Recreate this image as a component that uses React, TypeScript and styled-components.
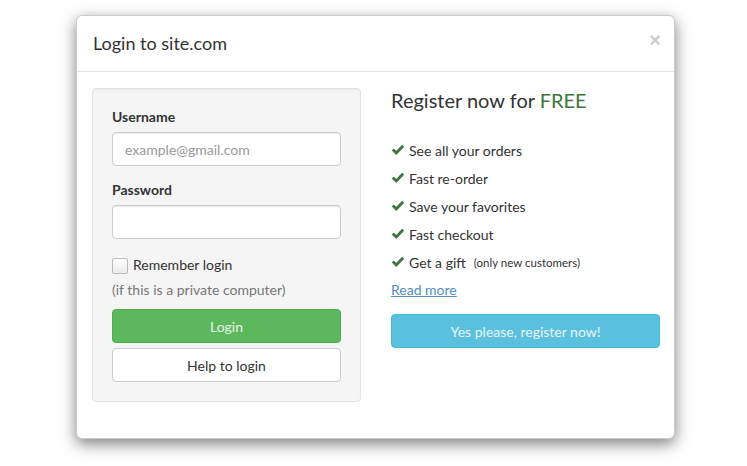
import React from 'react';
import styled, {createGlobalStyle} from 'styled-components';

const GlobalStyle = createGlobalStyle`
  html, body {
    margin: 0;
    padding: 0;
    background: #ffffff;
  }
  body {
    font-family: Lato, "Open Sans", "Liberation Sans", sans-serif;
    font-size: 14px;
    color: #333333;
  }
  * { box-sizing: border-box; }
`;

const Page = styled.div`
  width: 747px;
  height: 466px;
  padding-top: 15px;
  padding-left: 76px;
`;

const Modal = styled.div`
  width: 599px;
  background: #fff;
  border: 1px solid rgba(0, 0, 0, 0.2);
  border-radius: 6px;
  box-shadow: 0 5px 15px rgba(0, 0, 0, 0.5);
`;

const Header = styled.div`
  display: flex;
  align-items: center;
  justify-content: space-between;
  height: 56px;
  padding: 0 13px 2px 16px;
  border-bottom: 1px solid #e5e5e5;
`;

const Title = styled.h4`
  margin: 0;
  font-size: 18px;
  font-weight: 400;
  color: #333;
`;

const Close = styled.button`
  border: 0;
  background: transparent;
  padding: 0;
  margin-top: -6px;
  font-family: "Liberation Sans", sans-serif;
  font-size: 20px;
  font-weight: 700;
  line-height: 1;
  color: #000;
  opacity: 0.2;
`;

const Body = styled.div`
  display: grid;
  grid-template-columns: 269px 269px;
  column-gap: 30px;
  padding: 16px 15px 15px 15px;
`;

const Well = styled.div`
  background: #f5f5f5;
  border: 1px solid #e3e3e3;
  border-radius: 4px;
  padding: 19px 19px 19px;
  margin-bottom: 21px;
  box-shadow: inset 0 1px 1px rgba(0, 0, 0, 0.05);
`;

const Label = styled.label`
  display: block;
  font-weight: 700;
  font-size: 14px;
  margin-bottom: 7px;
  color: #333;
`;

const Field = styled.div`
  margin-bottom: 15px;
`;

const Input = styled.input`
  display: block;
  width: 100%;
  height: 34px;
  padding: 6px 12px;
  font-family: inherit;
  font-size: 14px;
  color: #555;
  background: #fff;
  border: 1px solid #ccc;
  border-radius: 4px;
  box-shadow: inset 0 1px 1px rgba(0, 0, 0, 0.075);
  &::placeholder { color: #999; }
`;

const CheckRow = styled.label`
  display: flex;
  align-items: center;
  gap: 5px;
  padding-top: 1px;
  font-size: 14px;
`;

const Box = styled.span`
  width: 16px;
  height: 16px;
  margin-top: 3px;
  border: 1px solid #bbb;
  border-radius: 2px;
  background: linear-gradient(#fff, #ececec);
`;

const Hint = styled.p`
  margin: 7px 0 11px;
  color: #777;
  font-size: 14px;
`;

const Button = styled.button<{$kind: 'success' | 'default' | 'info'}>`
  display: block;
  width: 100%;
  height: 34px;
  font-family: inherit;
  font-size: 14px;
  border-radius: 4px;
  border: 1px solid;
  ${p => p.$kind === 'success' && `
    background: #5cb85c;
    border-color: #4cae4c;
    color: #e8f5e8;
  `}
  ${p => p.$kind === 'info' && `
    background: #5bc0de;
    border-color: #46b8da;
    color: #e6f6fb;
  `}
  ${p => p.$kind === 'default' && `
    background: #fff;
    border-color: #ccc;
    color: #333;
  `}
  & + & { margin-top: 5px; }
`;

const Right = styled.div`
  display: flex;
  flex-direction: column;
`;

const Lead = styled.h3`
  margin: 0 0 24px;
  font-size: 20px;
  font-weight: 400;
  color: #333;
`;

const Free = styled.span`
  color: #3c763d;
`;

const List = styled.ul`
  list-style: none;
  margin: 0;
  padding: 0;
`;

const Item = styled.li`
  display: flex;
  align-items: center;
  gap: 4px;
  height: 28px;
  font-size: 14px;
`;

const Small = styled.small`
  font-size: 11.5px;
  margin-left: 4px;
`;

const Link = styled.a`
  font-size: 14px;
  color: #337ab7;
  text-decoration: underline;
  height: 28px;
  margin-bottom: 10px;
  line-height: 28px;
  align-self: flex-start;
  opacity: 0.85;
`;

const Check = () => (
  <svg width="14" height="12" viewBox="0 0 14 12">
    <path d="M0.8 6.4 L2.8 4.5 L5.2 6.9 L11.1 0.8 L13.2 2.8 L5.2 11 Z" fill="#3c763d" />
  </svg>
);

const perks = ['See all your orders', 'Fast re-order', 'Save your favorites', 'Fast checkout'];

const App: React.FC = () => {
  return (
    <Page>
      <GlobalStyle />
      <Modal>
        <Header>
          <Title>Login to site.com</Title>
          <Close>×</Close>
        </Header>
        <Body>
          <Well>
            <Field>
              <Label>Username</Label>
              <Input placeholder="example@gmail.com" />
            </Field>
            <Field>
              <Label>Password</Label>
              <Input type="password" />
            </Field>
            <CheckRow>
              <Box />
              Remember login
            </CheckRow>
            <Hint>(if this is a private computer)</Hint>
            <Button $kind="success">Login</Button>
            <Button $kind="default">Help to login</Button>
          </Well>
          <Right>
            <Lead>Register now for <Free>FREE</Free></Lead>
            <List>
              {perks.map(p => (
                <Item key={p}><Check />{p}</Item>
              ))}
              <Item><Check />Get a gift <Small>(only new customers)</Small></Item>
            </List>
            <Link href="#">Read more</Link>
            <Button $kind="info">Yes please, register now!</Button>
          </Right>
        </Body>
      </Modal>
    </Page>
  );
};

export default App;
